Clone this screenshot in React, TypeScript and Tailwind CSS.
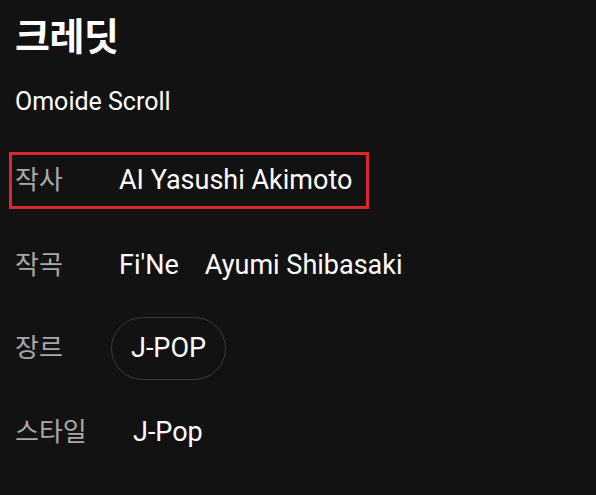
export default function App() {
  const font = { fontFamily: "Roboto, 'Noto Sans CJK KR', sans-serif" };
  return (
    <div className="w-[596px] h-[495px] bg-[#121212] text-white overflow-hidden" style={font}>
      <div className="pl-[15px] pt-[13px]">
        <h1 className="text-[38px] font-bold leading-[48px] tracking-[-0.5px]">크레딧</h1>
        <p className="mt-[27px] text-[25px] leading-[28px]">Omoide Scroll</p>
      </div>

      {/* Lyricist - highlighted */}
      <div className="mt-[36px] ml-[9px] w-[360px] h-[57px] border-[3px] border-[#dc2630] flex items-center pl-[3px]">
        <span className="w-[104px] text-[26px] text-[#a8a8a8]">작사</span>
        <span className="text-[27px]">AI Yasushi Akimoto</span>
      </div>

      {/* Composer */}
      <div className="mt-[28px] pl-[15px] h-[56px] flex items-center">
        <span className="w-[104px] text-[26px] text-[#a8a8a8]">작곡</span>
        <span className="text-[27px]">Fi'Ne</span>
        <span className="ml-[26px] text-[27px]">Ayumi Shibasaki</span>
      </div>

      {/* Genre */}
      <div className="mt-[24px] pl-[15px] flex items-center">
        <span className="w-[96px] text-[26px] text-[#a8a8a8]">장르</span>
        <span className="h-[63px] px-[19px] rounded-full border border-[#3a3a3a] flex items-center text-[27px]">J-POP</span>
      </div>

      {/* Style */}
      <div className="mt-[30px] pl-[15px] h-[44px] flex items-center">
        <span className="w-[118px] text-[26px] text-[#a8a8a8]">스타일</span>
        <span className="text-[27px]">J-Pop</span>
      </div>
    </div>
  );
}
